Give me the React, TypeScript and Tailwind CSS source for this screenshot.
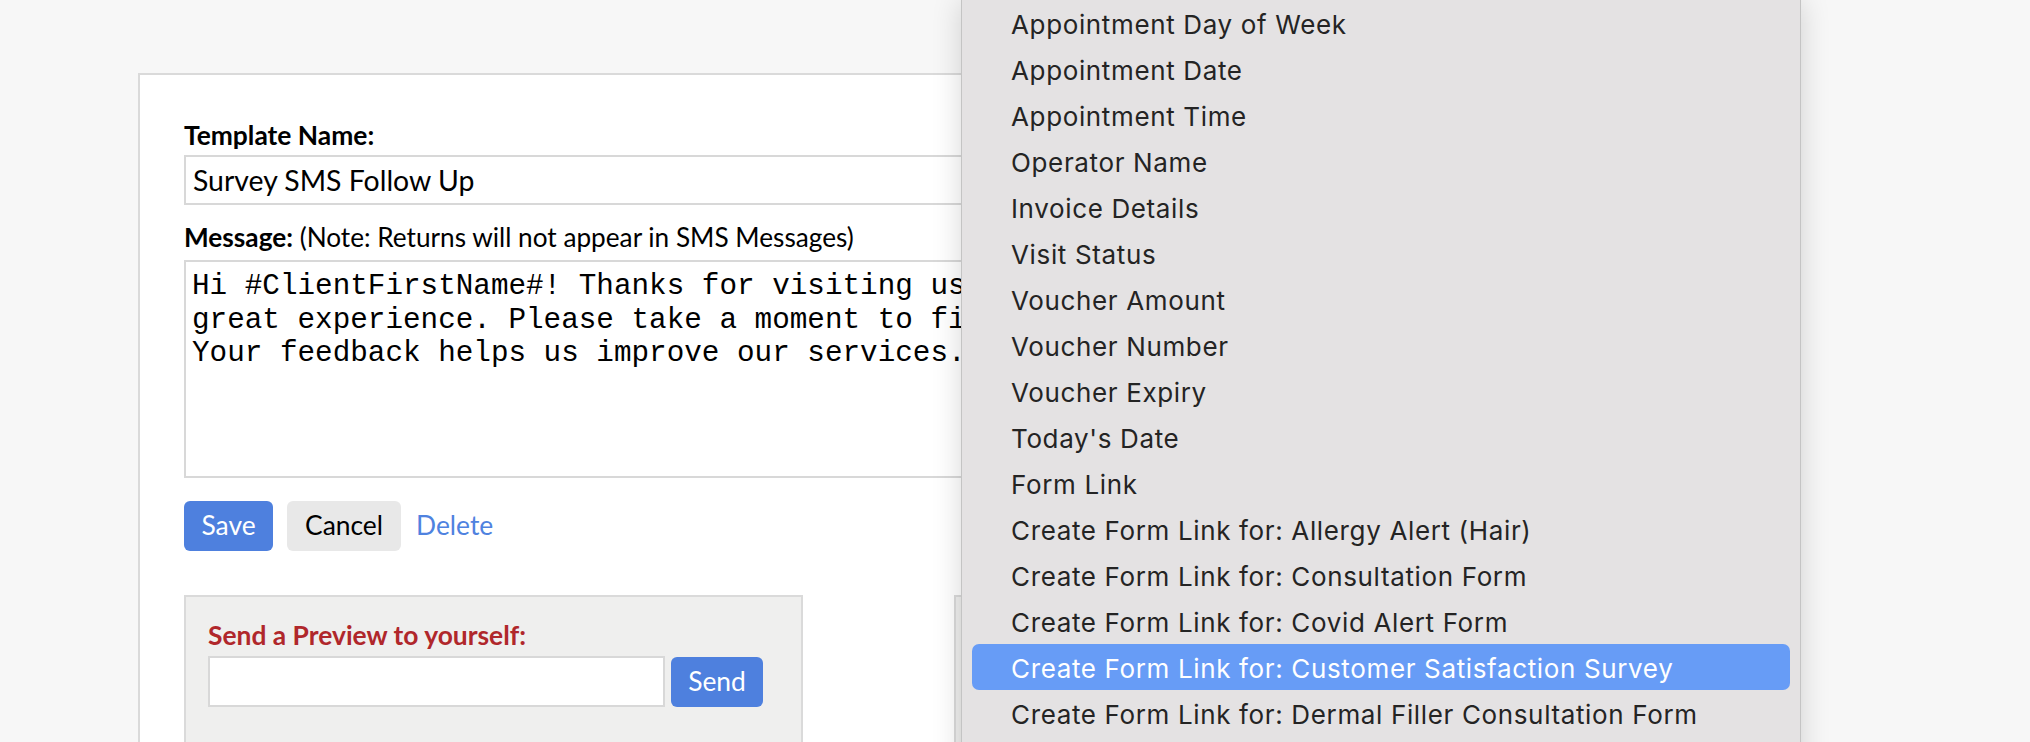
import React from "react";

const items = [
  "Appointment Day of Week",
  "Appointment Date",
  "Appointment Time",
  "Operator Name",
  "Invoice Details",
  "Visit Status",
  "Voucher Amount",
  "Voucher Number",
  "Voucher Expiry",
  "Today's Date",
  "Form Link",
  "Create Form Link for: Allergy Alert (Hair)",
  "Create Form Link for: Consultation Form",
  "Create Form Link for: Covid Alert Form",
  "Create Form Link for: Customer Satisfaction Survey",
  "Create Form Link for: Dermal Filler Consultation Form",
];

const message =
  "Hi #ClientFirstName#! Thanks for visiting us today, we hope you had a\ngreat experience. Please take a moment to fill in our short survey.\nYour feedback helps us improve our services. #FormLink#";

export default function App() {
  return (
    <div className="relative h-[742px] w-[2030px] overflow-hidden bg-[#f7f7f7] font-['Lato',sans-serif]">
      <div className="pl-[138px] pt-[73px]">
        <div className="h-[760px] w-[1560px] border-2 border-[#dadada] bg-white pl-[44px] pt-[45px]">
          <div className="text-[26.4px] font-bold leading-[31px] text-black">Template Name:</div>
          <div className="mt-[4px] flex h-[50px] w-[1300px] items-center border-2 border-[#d8d8d8] bg-white pl-[7px] text-[28.4px] leading-[31px] text-black">
            Survey SMS Follow Up
          </div>
          <div className="mt-[17px] text-[26.2px] leading-[31px] text-black">
            <span className="font-bold">Message:</span> (Note: Returns will not appear in SMS Messages)
          </div>
          <textarea
            readOnly
            wrap="off"
            value={message}
            className="mt-[7px] block h-[218px] w-[1300px] resize-none overflow-hidden border-2 border-[#d8d8d8] bg-white pl-[6px] pt-[8px] font-['Liberation_Mono',monospace] text-[29.3px] leading-[33.6px] text-black outline-none"
          />
          <div className="mt-[23px] flex items-center">
            <button className="flex h-[50px] w-[89px] items-center justify-center rounded-[6px] bg-[#4e80de] text-[26.4px] text-white">
              Save
            </button>
            <button className="ml-[14px] flex h-[50px] w-[114px] items-center justify-center rounded-[6px] bg-[#e8e8e8] text-[26.4px] text-black">
              Cancel
            </button>
            <span className="ml-[15px] text-[26.4px] text-[#4f82df]">Delete</span>
          </div>
          <div className="mt-[44px] flex gap-[151px]">
            <div className="h-[200px] w-[619px] border-2 border-[#dadada] bg-[#efefee] pl-[22px] pt-[23px]">
              <div className="text-[26.4px] font-bold leading-[31px] text-[#b0272b]">Send a Preview to yourself:</div>
              <div className="mt-[5px] flex items-center gap-[6px]">
                <div className="h-[51px] w-[457px] border-2 border-[#d8d8d8] bg-white" />
                <button className="flex h-[50px] w-[92px] items-center justify-center rounded-[6px] bg-[#4e80de] text-[26.4px] text-white">
                  Send
                </button>
              </div>
            </div>
            <div className="h-[200px] w-[619px] border-2 border-[#dadada] bg-[#efefee]" />
          </div>
        </div>
      </div>

      <div className="absolute left-[961px] top-0 h-[780px] w-[840px] border-x border-[#c4c4c4] bg-[#e4e2e3] px-[10px] shadow-[0_0_28px_rgba(0,0,0,0.16)] font-['Inter',sans-serif]">
        {items.map((t) => {
          const active = t === "Create Form Link for: Customer Satisfaction Survey";
          return (
            <div
              key={t}
              className={
                active
                  ? "flex h-[46px] items-center rounded-[7px] bg-[#679cf6] pl-[39px] pt-[3px] text-[26px] tracking-[0.64px] text-white"
                  : "flex h-[46px] items-center pl-[39px] pt-[3px] text-[26px] tracking-[0.64px] text-[#242424]"
              }
            >
              {t}
            </div>
          );
        })}
      </div>
    </div>
  );
}
